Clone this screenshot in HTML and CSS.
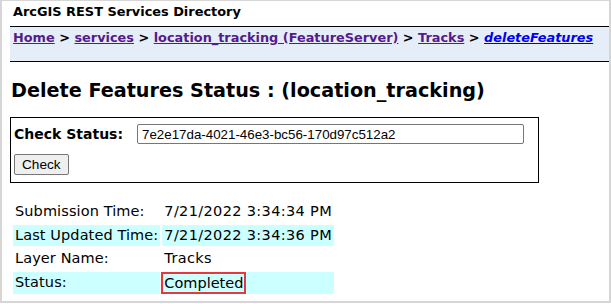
FILE: index.html
```html
<!DOCTYPE html>
<html>
<head>
<meta charset="utf-8">
<title>ArcGIS REST Services Directory</title>
<link rel="stylesheet" href="styles.css">
</head>
<body>
<div class="frame">
  <div class="page">
    <div class="titlebar">ArcGIS REST Services Directory</div>
    <div class="breadcrumbs">
      <a class="visited" href="#">Home</a> &gt;
      <a class="visited" href="#">services</a> &gt;
      <a class="visited" href="#">location_tracking (FeatureServer)</a> &gt;
      <a class="visited" href="#">Tracks</a> &gt;
      <a class="current" href="#">deleteFeatures</a>
    </div>
    <h2 class="heading">Delete Features Status : (location_tracking)</h2>
    <div class="checkbox">
      <div class="checkrow">
        <span class="checklabel">Check Status:</span>
        <input class="jobid" type="text" value="7e2e17da-4021-46e3-bc56-170d97c512a2">
      </div>
      <button class="checkbtn" type="button">Check</button>
    </div>
    <table class="status">
      <tr><td class="lbl">Submission Time:</td><td class="val">7/21/2022 3:34:34 PM</td></tr>
      <tr class="alt"><td class="lbl">Last Updated Time:</td><td class="val">7/21/2022 3:34:36 PM</td></tr>
      <tr><td class="lbl">Layer Name:</td><td class="val">Tracks</td></tr>
      <tr class="alt"><td class="lbl">Status:</td><td class="val done-cell"><span class="done">Completed</span></td></tr>
    </table>
  </div>
</div>
</body>
</html>
```

FILE: styles.css
```css
html, body {
  margin: 0;
  padding: 0;
  background: #ffffff;
}
body {
  font-family: "DejaVu Sans", Verdana, sans-serif;
  color: #000000;
}
.frame {
  width: 611px;
  height: 303px;
  box-sizing: border-box;
  border: 2px solid #d6d6d6;
  border-top-width: 1px;
  overflow: hidden;
}
.page {
  padding-left: 8px;
}
.titlebar {
  font-weight: bold;
  font-size: 12.9px;
  padding: 3px 0 0 3px;
  box-sizing: border-box;
  border-bottom: 1px solid #000;
  height: 26px;
}
.breadcrumbs {
  background: #e5eef8;
  border-bottom: 1px solid #000;
  height: 35px;
  box-sizing: border-box;
  padding: 3px 0 0 3px;
  font-weight: bold;
  font-size: 12.87px;
  white-space: nowrap;
}
.breadcrumbs a {
  text-decoration: underline;
}
.breadcrumbs a.visited {
  color: #551a8b;
}
.breadcrumbs a.current {
  color: #0000ee;
  font-style: italic;
}
.heading {
  font-size: 19.2px;
  font-weight: bold;
  margin: 17px 0 0 1px;
  height: 38px;
}
.checkbox {
  width: 529px;
  height: 66px;
  box-sizing: border-box;
  border: 1px solid #000;
  padding: 6px 0 0 3px;
}
.checkrow {
  display: flex;
  align-items: center;
  gap: 14px;
}
.checklabel {
  font-weight: bold;
  font-size: 14px;
}
.jobid {
  width: 387px;
  height: 20px;
  box-sizing: border-box;
  margin: 0;
  border: 1px solid #767676;
  border-radius: 2px;
  padding: 1px 4px;
  font-family: "Liberation Sans", Arial, sans-serif;
  font-size: 13.33px;
  color: #000;
}
.checkbtn {
  margin-top: 10px;
  height: 21px;
  box-sizing: border-box;
  padding: 1px 7px;
  border: 1px solid #767676;
  border-radius: 2px;
  background: #efefef;
  font-family: "Liberation Sans", Arial, sans-serif;
  font-size: 13.6px;
  color: #000;
}
.status {
  margin-top: 16px;
  margin-left: 1px;
  border-collapse: separate;
  border-spacing: 2px;
  font-size: 14.5px;
  line-height: 17px;
}
.status td {
  height: 21.5px;
  box-sizing: border-box;
  padding: 0 2px;
  vertical-align: middle;
  white-space: nowrap;
}
.status td.lbl {
  width: 144px;
  letter-spacing: 0.1px;
}
.status td.val {
  width: 169px;
  letter-spacing: 0.35px;
}
.status tr.alt td {
  background: #ccffff;
}
.status td.done-cell {
  padding-left: 0;
}
.status .done {
  display: inline-block;
  margin-left: -1px;
  padding: 0 1px;
  letter-spacing: 0;
  line-height: 18px;
  border: 2px solid #e0393e;
}
```
